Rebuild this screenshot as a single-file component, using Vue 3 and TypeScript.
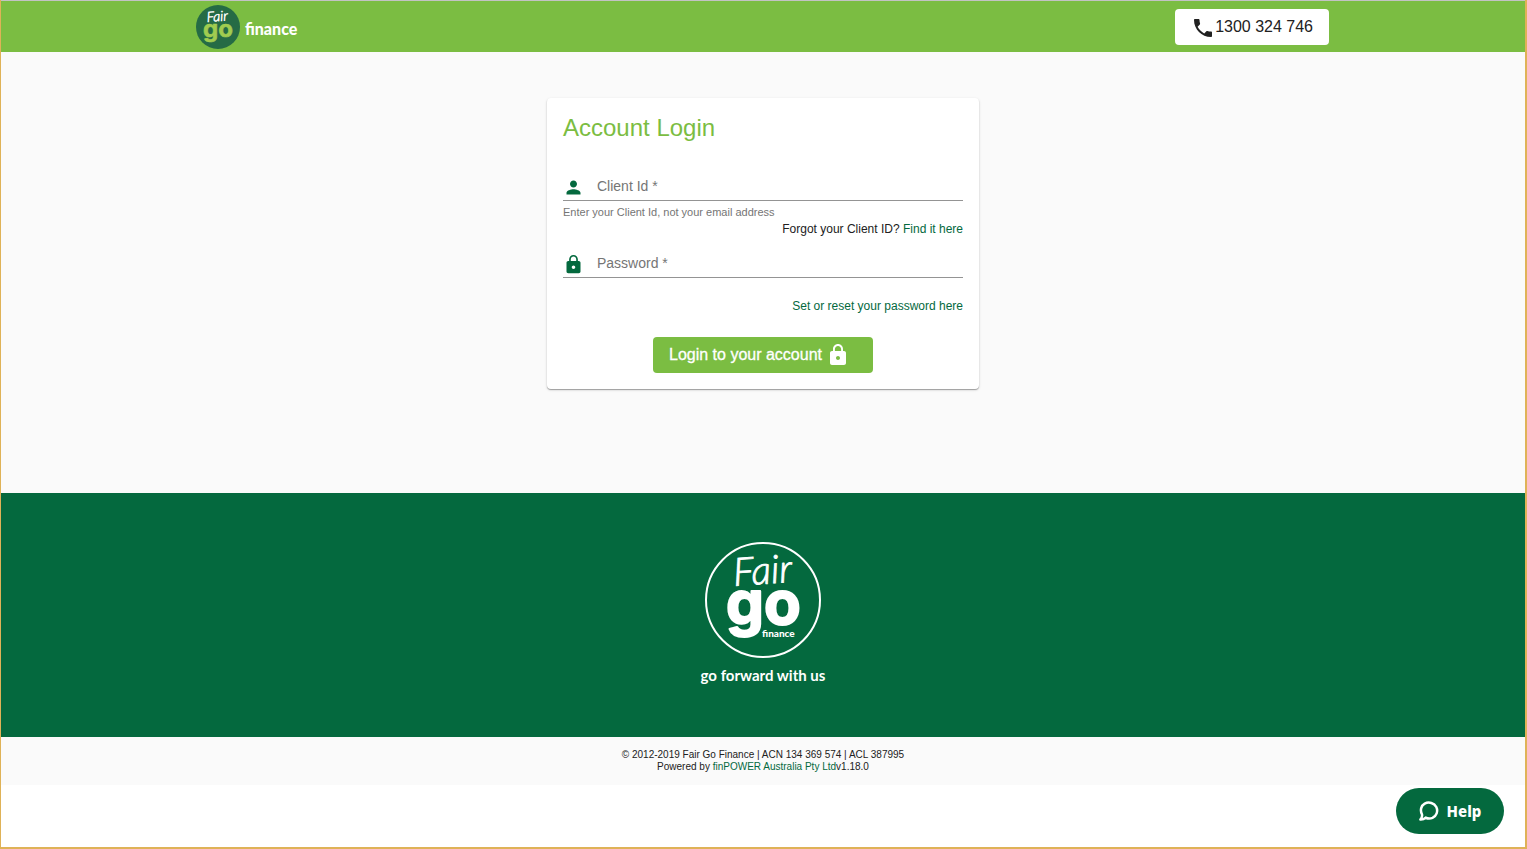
<script setup lang="ts">
import { ref } from 'vue'

const clientId = ref('')
const password = ref('')
const lockPath =
  'M18 8h-1V6c0-2.76-2.24-5-5-5S7 3.24 7 6v2H6c-1.100 0-2 .9-2 2v10c0 1.100.9 2 2 2h12c1.100 0 2-.9 2-2V10c0-1.100-.9-2-2-2zm-6 9c-1.100 0-2-.9-2-2s.9-2 2-2 2 .9 2 2-.9 2-2 2zm3.100-9H8.900V6c0-1.710 1.390-3.100 3.100-3.100s3.100 1.390 3.100 3.100v2z'
</script>

<template>
  <div class="page">
    <header class="bar">
      <div class="bar-inner">
        <a class="brand" href="#">
          <svg class="brand-mark" viewBox="0 0 46 46" aria-hidden="true">
            <circle cx="23" cy="23" r="22" fill="#256b45" />
            <text class="script" x="12" y="18" font-size="14" stroke-width="0.5" transform="rotate(-4 12 18)">Fair</text>
            <text class="go go-small" x="8" y="33" font-size="24" stroke-width="0.6">go</text>
          </svg>
          <span class="brand-name">finance</span>
        </a>
        <a class="phone" href="tel:1300324746">
          <svg viewBox="0 0 24 24" aria-hidden="true">
            <path
              fill="#212121"
              d="M6.620 10.790c1.440 2.830 3.760 5.140 6.590 6.590l2.200-2.200c.27-.27.67-.36 1.020-.24 1.120.37 2.330.57 3.570.57.55 0 1 .45 1 1V20c0 .55-.45 1-1 1-9.390 0-17-7.610-17-17 0-.55.45-1 1-1h3.500c.55 0 1 .45 1 1 0 1.250.2 2.450.57 3.570.11.35.03.74-.25 1.020l-2.200 2.200z"
            />
          </svg>
          <span>1300 324 746</span>
        </a>
      </div>
    </header>

    <main class="content">
      <form class="card" @submit.prevent>
        <h1>Account Login</h1>

        <div class="field">
          <svg viewBox="0 0 24 24" aria-hidden="true">
            <path
              fill="#04693e"
              d="M12 12c2.210 0 4-1.790 4-4s-1.790-4-4-4-4 1.790-4 4 1.790 4 4 4zm0 2c-2.670 0-8 1.340-8 4v2h16v-2c0-2.660-5.330-4-8-4z"
            />
          </svg>
          <div class="entry">
            <label v-show="!clientId" for="client-id">Client Id *</label>
            <input id="client-id" v-model="clientId" type="text" required aria-describedby="client-hint" />
          </div>
        </div>
        <p id="client-hint" class="hint">Enter your Client Id, not your email address</p>
        <p class="aside">Forgot your Client ID? <a href="#">Find it here</a></p>

        <div class="field second">
          <svg viewBox="0 0 24 24" aria-hidden="true">
            <path fill="#04693e" :d="lockPath" />
          </svg>
          <div class="entry">
            <label v-show="!password" for="password">Password *</label>
            <input id="password" v-model="password" type="password" required />
          </div>
        </div>
        <p class="aside reset"><a href="#">Set or reset your password here</a></p>

        <button class="submit" type="submit">
          <span>Login to your account</span>
          <svg viewBox="0 0 24 24" aria-hidden="true">
            <path fill="#fff" :d="lockPath" />
          </svg>
        </button>
      </form>
    </main>

    <section class="banner">
      <svg class="emblem" viewBox="0 0 118 118" aria-hidden="true">
        <circle cx="59" cy="59" r="57" fill="none" stroke="#fff" stroke-width="2" />
        <text class="script" x="30" y="45" font-size="39" stroke-width="0.9" transform="rotate(-4 30 45)">Fair</text>
        <text class="go" x="22" y="83" font-size="60" stroke-width="2">go</text>
        <text class="emblem-name" x="58" y="96" font-size="10">finance</text>
      </svg>
      <p>go forward with us</p>
    </section>

    <footer class="legal">
      <p>© 2012-2019 Fair Go Finance | ACN 134 369 574 | ACL 387995</p>
      <p>Powered by <a href="#">finPOWER Australia Pty Ltd</a>v1.18.0</p>
    </footer>

    <button class="help" type="button">
      <svg viewBox="0 0 20 20" aria-hidden="true">
        <path
          d="M3 13.500C.8 9 2.200 4.500 5.700 2.600c4.200-2.300 9.600-.6 11.600 3.400 2 4.300.2 9.100-3.800 10.900-2.400 1-4.900.8-6.800-.3-1.500 1.500-3.300 2.100-5.300 2 1.200-1.500 2-3.100 1.600-5.100z"
          fill="none"
          stroke="#fff"
          stroke-width="2.500"
          stroke-linejoin="round"
        />
      </svg>
      <span>Help</span>
    </button>
  </div>
</template>

<style>
body {
  margin: 0;
}
</style>

<style scoped>
.page {
  box-sizing: border-box;
  min-height: 100vh;
  border: solid #dfb257;
  border-width: 0 2px 2px 1px;
  background: #fff;
  color: #212121;
  font-family: "Liberation Sans", Arial, sans-serif;
}
p,
h1 {
  margin: 0;
}
a {
  color: #04693e;
  text-decoration: none;
}
.bar {
  border-top: 1px solid #c3c3c3;
  padding: 0 18px 0 16px;
  background: #7bbd42;
}
.bar-inner {
  display: flex;
  align-items: center;
  justify-content: space-between;
  max-width: 1134px;
  height: 51px;
  margin: 0 auto;
}
.brand {
  display: flex;
  align-items: center;
  gap: 4px;
  color: #fff;
}
.brand-mark {
  width: 46px;
  height: 46px;
}
.brand-name {
  padding-top: 4px;
  font: 900 16px/20px Lato, sans-serif;
}
.script {
  fill: #fff;
  stroke: #fff;
  font-family: Lato, sans-serif;
  font-style: italic;
  font-weight: 300;
}
.go {
  fill: #fff;
  stroke: #fff;
  stroke-linejoin: round;
  font-family: Inter, sans-serif;
  font-weight: 700;
}
.go-small {
  fill: #a0cc50;
  stroke: #a0cc50;
}
.emblem-name {
  fill: #fff;
  font-family: Lato, sans-serif;
  font-weight: 900;
}
.phone {
  display: flex;
  align-items: center;
  box-sizing: border-box;
  height: 36px;
  padding: 0 16px;
  border-radius: 4px;
  background: #fff;
  color: #212121;
  font-size: 16px;
}
.phone svg {
  width: 24px;
  height: 24px;
  padding-top: 2px;
}
.content {
  padding: 46px 16px 104px;
  background: #fafafa;
}
.card {
  display: flex;
  flex-direction: column;
  box-sizing: border-box;
  max-width: 432px;
  margin: 0 auto;
  padding: 16px;
  border-radius: 4px;
  background: #fff;
  box-shadow: 0 1px 1px rgba(0, 0, 0, 0.3), 0 1px 3px rgba(0, 0, 0, 0.14);
}
h1 {
  color: #7bbd42;
  font-size: 24px;
  font-weight: 400;
  line-height: 28px;
}
.field {
  display: flex;
  align-items: center;
  gap: 13px;
  height: 28px;
  margin-top: 30px;
  border-bottom: 1px solid #949494;
}
.field svg {
  width: 21px;
  height: 21px;
  padding-top: 2px;
}
.entry {
  display: grid;
  flex: 1;
  align-items: center;
}
.entry label,
.entry input {
  grid-area: 1 / 1;
  font-size: 14px;
  line-height: 20px;
}
.entry label {
  color: #757575;
  pointer-events: none;
}
.entry input {
  min-width: 0;
  padding: 0;
  border: 0;
  outline: 0;
  background: transparent;
  font-family: inherit;
}
.hint {
  margin-top: 4px;
  color: #757575;
  font-size: 11px;
  line-height: 14px;
}
.aside {
  margin-top: 2px;
  font-size: 12px;
  line-height: 16px;
  text-align: right;
}
.second {
  margin-top: 12px;
}
.reset {
  margin-top: 20px;
}
.submit {
  display: flex;
  align-items: center;
  align-self: center;
  gap: 4px;
  width: 220px;
  height: 36px;
  margin-top: 23px;
  padding: 0 16px;
  border: 0;
  border-radius: 4px;
  background: #7bbd42;
  color: #fff;
  font: 400 16px/36px "Liberation Sans", Arial, sans-serif;
  -webkit-text-stroke: 0.3px #fff;
  white-space: nowrap;
}
.submit svg {
  width: 24px;
  height: 24px;
}
.banner {
  display: flex;
  flex-direction: column;
  align-items: center;
  padding: 48px 16px 52px;
  background: #04693e;
  color: #fff;
}
.emblem {
  width: 118px;
  height: 118px;
}
.banner p {
  margin-top: 6px;
  font: 700 15px/20px Lato, sans-serif;
}
.legal {
  padding: 12px 16px;
  background: #fafafa;
  font-size: 10px;
  line-height: 12px;
  text-align: center;
}
.help {
  position: fixed;
  right: 23px;
  bottom: 15px;
  display: flex;
  align-items: center;
  justify-content: center;
  gap: 8px;
  width: 108px;
  height: 46px;
  padding: 0;
  border: 0;
  border-radius: 23px;
  background: #04693e;
  color: #fff;
  font: 800 15px/20px "Noto Sans", sans-serif;
}
.help svg {
  width: 20px;
  height: 20px;
}
</style>
